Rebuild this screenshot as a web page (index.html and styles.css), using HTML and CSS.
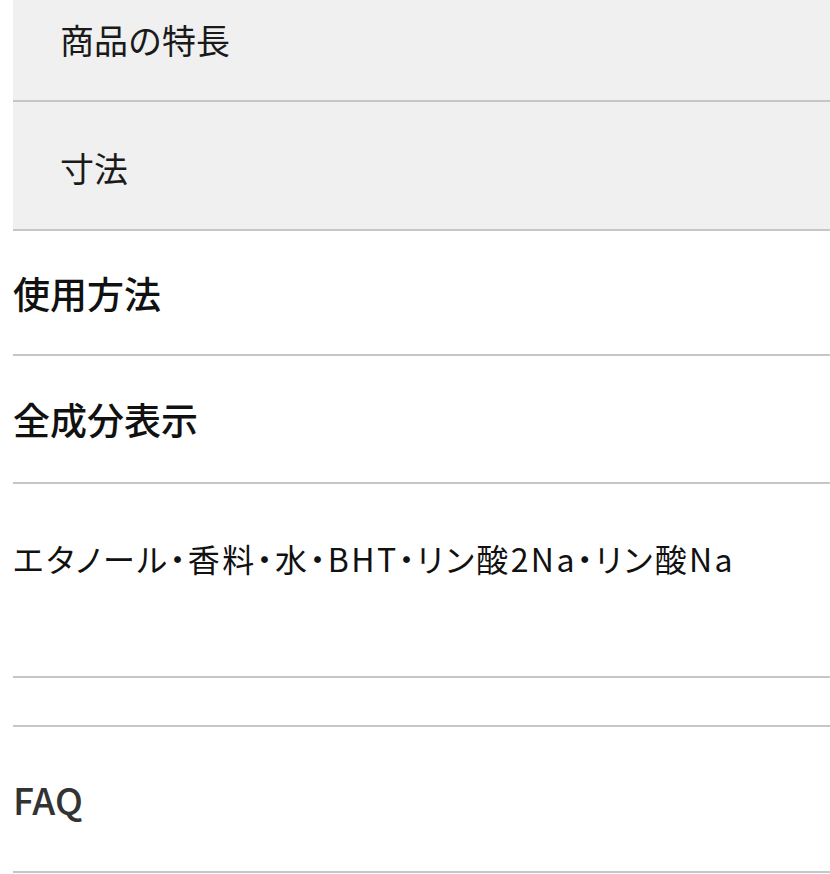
FILE: index.html
```html
<!DOCTYPE html>
<html lang="ja">
<head>
<meta charset="utf-8">
<link rel="stylesheet" href="styles.css">
</head>
<body>
<div class="page">
  <ul class="sub-list">
    <li class="sub-item sub-first">商品の特長</li>
    <li class="sub-item sub-second">寸法</li>
  </ul>
  <div class="acc-item acc-usage"><h2 class="acc-title">使用方法</h2></div>
  <div class="acc-item"><h2 class="acc-title">全成分表示</h2></div>
  <div class="acc-body"><p class="ingredients">エタノール・香料・水・BHT・リン酸2Na・リン酸Na</p></div>
  <div class="spacer"></div>
  <div class="acc-item acc-faq"><h2 class="acc-title faq-title">FAQ</h2></div>
</div>
</body>
</html>
```

FILE: styles.css
```css
html, body {
  margin: 0;
  padding: 0;
  background: #ffffff;
}
body {
  font-family: "Noto Sans CJK JP", "Noto Sans", sans-serif;
  color: #111111;
  overflow: hidden;
}
.page {
  margin-left: 13px;
  width: 830px;
}
.sub-list {
  list-style: none;
  margin: 0;
  padding: 0;
  background: #f0f0f0;
}
.sub-item {
  display: flex;
  align-items: center;
  padding-left: 47px;
  font-size: 34px;
  font-weight: 400;
  color: #1a1a1a;
  border-bottom: 2px solid #c6c6c6;
}
.sub-first {
  height: 78px;
  padding-bottom: 22px;
}
.sub-second {
  padding-top: 4px;
  box-sizing: border-box;
  height: 129px;
}
.acc-item {
  display: flex;
  align-items: center;
  height: 126px;
  border-bottom: 2px solid #c6c6c6;
}
.acc-usage {
  height: 123px;
}
.acc-title {
  margin: 0;
  font-size: 37px;
  font-weight: 500;
  color: #111111;
}
.acc-body {
  height: 194px;
  border-bottom: 2px solid #c6c6c6;
  display: flex;
  align-items: center;
  padding-bottom: 44px;
  box-sizing: border-box;
}
.ingredients {
  margin: 0;
  font-size: 32px;
  font-weight: 400;
  color: #111111;
  font-feature-settings: "palt";
  letter-spacing: 2.4px;
}
.spacer {
  height: 47px;
  border-bottom: 2px solid #c6c6c6;
}
.acc-faq {
  height: 144px;
}
.faq-title {
  color: #333333;
}
```
